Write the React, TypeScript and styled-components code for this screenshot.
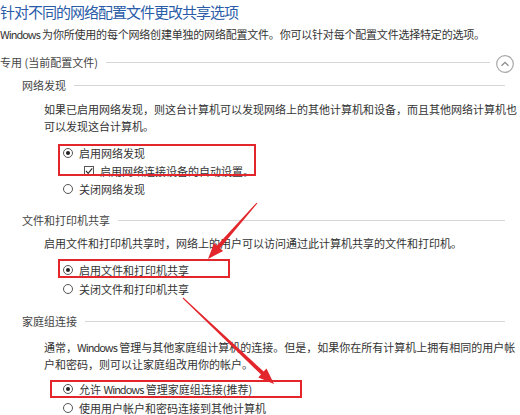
import React from "react";
import styled, { createGlobalStyle } from "styled-components";

const GlobalStyle = createGlobalStyle`
  html, body {
    margin: 0;
    padding: 0;
    background: #fff;
  }
  body {
    font-family: "Noto Sans CJK SC", "Noto Sans", sans-serif;
    color: #333;
  }
`;

const Page = styled.div`
  position: relative;
  width: 520px;
  height: 415px;
  overflow: hidden;
  background: #fff;
`;

const Title = styled.h1`
  margin: 0;
  font-size: 15px;
  font-weight: 400;
  letter-spacing: -1px;
  line-height: 24px;
  color: #2a5ca8;
  white-space: nowrap;
`;

const Desc = styled.div`
  margin-top: 2px;
  font-size: 11px;
  line-height: 16px;
  letter-spacing: -0.2px;
  color: #333;
  white-space: nowrap;
`;

const Latin = styled.span`
  letter-spacing: -1px;
`;

interface HeaderProps {
  $indent: number;
  $top: number;
  $right: number;
}

const Header = styled.div<HeaderProps>`
  display: flex;
  align-items: center;
  height: 20px;
  margin-top: ${({ $top }) => $top}px;
  padding-left: ${({ $indent }) => $indent}px;
  padding-right: ${({ $right }) => $right}px;
  font-size: 11px;
  color: #444;
  white-space: nowrap;
`;

const Rule = styled.div`
  flex: 1;
  height: 1px;
  margin-left: 8px;
  background: #d6d6d6;
`;

const Collapse = styled.svg`
  flex: none;
  margin-left: 6px;
  margin-top: 3px;
`;

const Para = styled.p<{ $top: number }>`
  margin: ${({ $top }) => $top}px 0 0;
  padding-left: 44px;
  font-size: 11px;
  line-height: 17px;
  color: #333;
  white-space: nowrap;
`;

const Options = styled.div<{ $top: number }>`
  margin-top: ${({ $top }) => $top}px;
  padding-left: 63px;
`;

interface MarkedProps {
  $l: number;
  $t: number;
  $w: number;
  $h: number;
}

const Marked = styled.div<MarkedProps>`
  position: relative;
  &::after {
    content: "";
    position: absolute;
    left: ${({ $l }) => $l}px;
    top: ${({ $t }) => $t}px;
    width: ${({ $w }) => $w}px;
    height: ${({ $h }) => $h}px;
    border: 2px solid #e3262c;
    box-sizing: border-box;
    pointer-events: none;
  }
`;

const Row = styled.div<{ $h?: number; $indent?: number }>`
  display: flex;
  align-items: center;
  gap: 6px;
  height: ${({ $h }) => $h ?? 19}px;
  padding-left: ${({ $indent }) => $indent ?? 0}px;
  font-size: 11px;
  color: #333;
  white-space: nowrap;
`;

const Radio = styled.span<{ $on?: boolean }>`
  flex: none;
  display: flex;
  align-items: center;
  justify-content: center;
  width: 10px;
  height: 10px;
  border: 1px solid #555;
  border-radius: 50%;
  box-sizing: border-box;
  &::after {
    content: "";
    width: 4px;
    height: 4px;
    border-radius: 50%;
    background: ${({ $on }) => ($on ? "#222" : "transparent")};
  }
`;

const Check = styled.svg`
  flex: none;
`;

const Overlay = styled.svg`
  position: absolute;
  left: 0;
  top: 0;
  pointer-events: none;
`;

// arrow polygon: thin tail widening to a triangular head
const arrowPoints = (tx: number, ty: number, px: number, py: number) => {
  const dx = px - tx;
  const dy = py - ty;
  const len = Math.hypot(dx, dy);
  const ux = dx / len;
  const uy = dy / len;
  const nx = -uy;
  const ny = ux;
  const head = 16;
  const bx = px - ux * head;
  const by = py - uy * head;
  const pts: [number, number][] = [
    [tx + nx * 0.5, ty + ny * 0.5],
    [bx + nx * 2, by + ny * 2],
    [bx + nx * 6, by + ny * 6],
    [px, py],
    [bx - nx * 6, by - ny * 6],
    [bx - nx * 2, by - ny * 2],
    [tx - nx * 0.5, ty - ny * 0.5],
  ];
  return pts.map((p) => p.map((v) => v.toFixed(1)).join(",")).join(" ");
};

const Radios: React.FC<{ on?: boolean; label: React.ReactNode; h?: number }> = ({
  on,
  label,
  h,
}) => (
  <Row $h={h}>
    <Radio $on={on} />
    <span>{label}</span>
  </Row>
);

const App: React.FC = () => {
  return (
    <Page>
      <GlobalStyle />
      <Title>针对不同的网络配置文件更改共享选项</Title>
      <Desc>
        <Latin>Windows</Latin> 为你所使用的每个网络创建单独的网络配置文件。你可以针对每个配置文件选择特定的选项。
      </Desc>

      <Header $indent={0} $top={10} $right={6}>
        专用 (当前配置文件)
        <Rule />
        <Collapse width="18" height="18" viewBox="0 0 18 18">
          <circle cx="9" cy="9" r="8.3" fill="none" stroke="#a8a8a8" strokeWidth="1.2" />
          <path d="M5.5 10.8 L9 7.3 L12.5 10.8" fill="none" stroke="#8a8a8a" strokeWidth="1.3" />
        </Collapse>
      </Header>

      <Header $indent={22} $top={3} $right={15}>
        网络发现
        <Rule />
      </Header>
      <Para $top={6}>
        如果已启用网络发现，则这台计算机可以发现网络上的其他计算机和设备，而且其他网络计算机也
        <br />
        可以发现这台计算机。
      </Para>
      <Options $top={8}>
        <Marked $l={-5} $t={1} $w={198} $h={32}>
          <Radios on label="启用网络发现" />
          <Row $h={17} $indent={21}>
            <Check width="10" height="10" viewBox="0 0 10 10">
              <rect x="0.5" y="0.5" width="9" height="9" fill="#fff" stroke="#555" />
              <path d="M2 5 L4.2 7.3 L8.2 2.3" fill="none" stroke="#333" strokeWidth="1.2" />
            </Check>
            <span>启用网络连接设备的自动设置。</span>
          </Row>
        </Marked>
        <Radios label="关闭网络发现" />
      </Options>

      <Header $indent={22} $top={12} $right={15}>
        文件和打印机共享
        <Rule />
      </Header>
      <Para $top={5}>启用文件和打印机共享时，网络上的用户可以访问通过此计算机共享的文件和打印机。</Para>
      <Options $top={8}>
        <Marked $l={-5} $t={-1} $w={172} $h={19}>
          <Radios on label="启用文件和打印机共享" />
        </Marked>
        <Radios label="关闭文件和打印机共享" />
      </Options>

      <Header $indent={22} $top={13} $right={15}>
        家庭组连接
        <Rule />
      </Header>
      <Para $top={8}>
        通常，<Latin>Windows</Latin> 管理与其他家庭组计算机的连接。但是，如果你在所有计算机上拥有相同的用户帐
        <br />
        户和密码，则可以让家庭组改用你的帐户。
      </Para>
      <Options $top={6}>
        <Marked $l={-13} $t={1} $w={252} $h={18}>
          <Radios
            on
            label={
              <>
                允许 <Latin>Windows</Latin> 管理家庭组连接(推荐)
              </>
            }
          />
        </Marked>
        <Radios label="使用用户帐户和密码连接到其他计算机" />
      </Options>

      <Overlay width="520" height="415" viewBox="0 0 520 415">
        <polygon points={arrowPoints(257, 203, 208, 259)} fill="#e3262c" />
        <polygon points={arrowPoints(183, 298, 274, 384)} fill="#e3262c" />
      </Overlay>
    </Page>
  );
};

export default App;
